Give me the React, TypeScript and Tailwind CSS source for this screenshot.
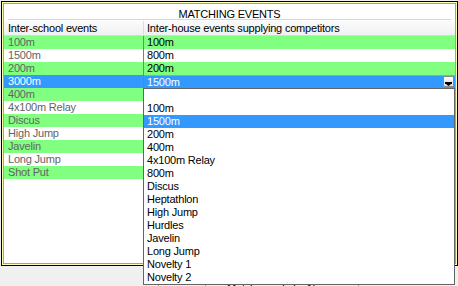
import React from "react";

const leftRows: { t: string; c: "g" | "w" | "b" }[] = [
  { t: "100m", c: "g" },
  { t: "1500m", c: "w" },
  { t: "200m", c: "g" },
  { t: "3000m", c: "b" },
  { t: "400m", c: "g" },
  { t: "4x100m Relay", c: "w" },
  { t: "Discus", c: "g" },
  { t: "High Jump", c: "w" },
  { t: "Javelin", c: "g" },
  { t: "Long Jump", c: "w" },
  { t: "Shot Put", c: "g" },
];

const rightRows: { t: string; c: "g" | "w" }[] = [
  { t: "100m", c: "g" },
  { t: "800m", c: "w" },
  { t: "200m", c: "g" },
];

const listItems = [
  "",
  "100m",
  "1500m",
  "200m",
  "400m",
  "4x100m Relay",
  "800m",
  "Discus",
  "Heptathlon",
  "High Jump",
  "Hurdles",
  "Javelin",
  "Long Jump",
  "Novelty 1",
  "Novelty 2",
];

function bgOf(c: string) {
  if (c === "g") return "bg-[#80ff80]";
  if (c === "b") return "bg-[#3399ff]";
  return "bg-white";
}

export default function App() {
  return (
    <div
      className="relative w-[458px] h-[286px] overflow-hidden bg-[#f0f0f0] text-[11px] tracking-[-0.2px] text-black"
      style={{ fontFamily: '"Liberation Sans", Arial, sans-serif' }}
    >
      {/* frame */}
      <div className="ml-[1px] mt-[1px] w-[457px] h-[265px] border border-black">
        <div className="w-full h-full border border-[#ffffb0]">
          <div className="w-full h-full border border-[#a0a0a0] bg-white flex flex-col">
            {/* title */}
            <div className="h-[15px] pt-[4px] leading-[13px] text-center">MATCHING EVENTS</div>
            <div className="h-[1px] mx-[4px] bg-[#c6dbef]" />
            <div className="h-[1px]" />
            {/* header */}
            <div className="flex h-[15px] border-b border-[#d6d6d6] bg-gradient-to-b from-[#fbfbfb] to-[#eef0f2] leading-[14px]">
              <div className="w-[139px] pl-[4px]">Inter-school events</div>
              <div className="w-[1px] bg-[#dcdcdc]" />
              <div className="flex-1 pl-[3px]">Inter-house events supplying competitors</div>
            </div>
            {/* rows */}
            <div className="flex flex-1">
              <div className="w-[139px] flex flex-col">
                {leftRows.map((r, i) => (
                  <div
                    key={i}
                    className={`h-[13px] leading-[13px] pl-[4px] ${bgOf(r.c)} ${
                      r.c === "b" ? "text-white" : "text-[#646464]"
                    }`}
                  >
                    {r.t}
                  </div>
                ))}
              </div>
              <div className="w-[1px] bg-[#808080]" />
              <div className="flex-1 flex flex-col">
                {rightRows.map((r, i) => (
                  <div key={i} className={`h-[13px] leading-[13px] pl-[3px] ${bgOf(r.c)}`}>
                    {r.t}
                  </div>
                ))}
                <div className="h-[13px] border-t border-[#a0a0a0] bg-[#3399ff] flex items-start">
                  <div className="flex-1 pl-[3px] leading-[12px] text-white">1500m</div>
                  <div className="mr-[1px] w-[11px] h-[11px] border border-[#8a8a8a] bg-gradient-to-b from-[#ffffff] to-[#dcdcdc] flex items-end justify-center">
                    <svg width="7" height="4" viewBox="0 0 7 4">
                      <rect x="0" y="0" width="7" height="2" fill="#000" />
                      <polygon points="1,2 6,2 3.5,4" fill="#000" />
                    </svg>
                  </div>
                </div>
              </div>
            </div>
          </div>
        </div>
      </div>

      {/* status bar (partially hidden behind the open list) */}
      <div className="mt-[15px] h-[20px] flex leading-[13px]">
        <div className="w-[158px]" />
        <div className="w-[1px] bg-[#a0a0a0]" />
        <div className="w-[46px]" />
        <div className="w-[1px] bg-[#a0a0a0]" />
        <div className="w-[152px] pl-[21px] pt-[1px] whitespace-nowrap overflow-hidden">
          Matching rule by Name
        </div>
        <div className="w-[1px] bg-[#a0a0a0]" />
      </div>

      {/* dropdown list overlay */}
      <div className="absolute left-[143px] top-[88px] w-[312px] h-[197px] border border-[#646464] bg-white flex flex-col">
        {listItems.map((t, i) => (
          <div
            key={i}
            className={`h-[13px] shrink-0 leading-[13px] pl-[3px] whitespace-nowrap ${
              t === "1500m" ? "bg-[#3399ff] text-white" : ""
            }`}
          >
            {t}
          </div>
        ))}
      </div>
    </div>
  );
}
